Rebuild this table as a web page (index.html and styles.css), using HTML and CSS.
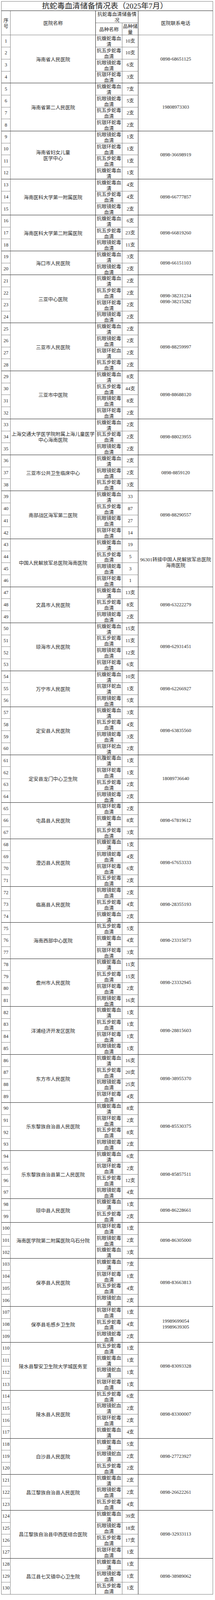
FILE: index.html
```html
<!DOCTYPE html>
<html lang="zh-CN">
<head>
<meta charset="utf-8">
<title>抗蛇毒血清储备情况表（2025年7月）</title>
<link rel="stylesheet" href="styles.css">
</head>
<body>
<div class="sheet">
<div class="title">抗蛇毒血清储备情况表（2025年7月）</div>
<div class="n hd r2">序号</div><div class="h hd r2">医院名称</div><div class="sub hd">抗蛇毒血清储备情况</div><div class="p hd r2">医院联系电话</div>
<div class="s hd">品种名称</div><div class="q hd">品种储量</div>

<div class="n">1</div><div class="h r4">海南省人民医院</div><div class="s">抗蝮蛇毒血清</div><div class="q">10支</div><div class="p r4">0898-68651125</div>
<div class="n">2</div><div class="s">抗五步蛇毒血清</div><div class="q">10支</div>
<div class="n">3</div><div class="s">抗眼镜蛇毒血清</div><div class="q">6支</div>
<div class="n e">4</div><div class="s e">抗银环蛇毒血清</div><div class="q e">3支</div>

<div class="n">5</div><div class="h r4">海南省第二人民医院</div><div class="s">抗蝮蛇毒血清</div><div class="q">7支</div><div class="p r4">19808973303</div>
<div class="n">6</div><div class="s">抗眼镜蛇毒血清</div><div class="q">5支</div>
<div class="n">7</div><div class="s">抗五步蛇毒血清</div><div class="q">2支</div>
<div class="n e">8</div><div class="s e">抗银环蛇毒血清</div><div class="q e">2支</div>

<div class="n">9</div><div class="h r4">海南省妇女儿童<br>医学中心</div><div class="s">抗眼镜蛇毒血清</div><div class="q">1支</div><div class="p r4">0898-36698919</div>
<div class="n">10</div><div class="s">抗银环蛇毒血清</div><div class="q">1支</div>
<div class="n">11</div><div class="s">抗五步蛇毒血清</div><div class="q">1支</div>
<div class="n e">12</div><div class="s e">抗蝮蛇毒血清</div><div class="q e">1支</div>

<div class="n">13</div><div class="h r3">海南医科大学第一附属医院</div><div class="s">抗蝮蛇毒血清</div><div class="q">4支</div><div class="p r3">0898-66777857</div>
<div class="n">14</div><div class="s">抗五步蛇毒血清</div><div class="q">4支</div>
<div class="n e">15</div><div class="s e">抗眼镜蛇毒血清</div><div class="q e">2支</div>

<div class="n">16</div><div class="h r3">海南医科大学第二附属医院</div><div class="s">抗蝮蛇毒血清</div><div class="q">6支</div><div class="p r3">0898-66819260</div>
<div class="n">17</div><div class="s">抗五步蛇毒血清</div><div class="q">23支</div>
<div class="n e">18</div><div class="s e">抗眼镜蛇毒血清</div><div class="q e">11支</div>

<div class="n">19</div><div class="h r2">海口市人民医院</div><div class="s">抗蝮蛇毒血清</div><div class="q">3支</div><div class="p r2">0898-66151103</div>
<div class="n e">20</div><div class="s e">抗眼镜蛇毒血清</div><div class="q e">2支</div>

<div class="n">21</div><div class="h r4">三亚中心医院</div><div class="s">抗蝮蛇毒血清</div><div class="q">2支</div><div class="p r4">0898-38231234<br>0898-38215282</div>
<div class="n">22</div><div class="s">抗五步蛇毒血清</div><div class="q">2支</div>
<div class="n">23</div><div class="s">抗银环蛇毒血清</div><div class="q">2支</div>
<div class="n e">24</div><div class="s e">抗眼镜蛇毒血清</div><div class="q e">2支</div>

<div class="n">25</div><div class="h r4">三亚市人民医院</div><div class="s">抗蝮蛇毒血清</div><div class="q">2支</div><div class="p r4">0898-88259997</div>
<div class="n">26</div><div class="s">抗眼镜蛇毒血清</div><div class="q">2支</div>
<div class="n">27</div><div class="s">抗银环蛇血清</div><div class="q">2支</div>
<div class="n e">28</div><div class="s e">抗五步蛇毒血清</div><div class="q e">2支</div>

<div class="n">29</div><div class="h r4">三亚市中医院</div><div class="s">抗蝮蛇毒血清</div><div class="q">8支</div><div class="p r4">0898-88688120</div>
<div class="n">30</div><div class="s">抗五步蛇毒血清</div><div class="q">44支</div>
<div class="n">31</div><div class="s">抗眼镜蛇毒血清</div><div class="q">8支</div>
<div class="n e">32</div><div class="s e">抗银环蛇毒血清</div><div class="q e">2支</div>

<div class="n">33</div><div class="h r3">上海交通大学医学院附属上海儿童医学中心海南医院</div><div class="s">抗蝮蛇毒血清</div><div class="q">2支</div><div class="p r3">0898-88023955</div>
<div class="n">34</div><div class="s">抗五步蛇毒血清</div><div class="q">2支</div>
<div class="n e">35</div><div class="s e">抗眼镜蛇毒血清</div><div class="q e">2支</div>

<div class="n">36</div><div class="h r3">三亚市公共卫生临床中心</div><div class="s">抗蝮蛇毒血清</div><div class="q">2支</div><div class="p r3">0898-8859120</div>
<div class="n">37</div><div class="s">抗眼镜蛇毒血清</div><div class="q">2支</div>
<div class="n e">38</div><div class="s e">抗五步蛇毒血清</div><div class="q e">3支</div>

<div class="n">39</div><div class="h r4">南部战区海军第二医院</div><div class="s">抗蝮蛇毒血清</div><div class="q">33</div><div class="p r4">0898-88290557</div>
<div class="n">40</div><div class="s">抗五步蛇毒血清</div><div class="q">87</div>
<div class="n">41</div><div class="s">抗眼镜蛇毒血清</div><div class="q">27</div>
<div class="n e">42</div><div class="s e">抗银环蛇毒血清</div><div class="q e">14</div>

<div class="n">43</div><div class="h r4">中国人民解放军总医院海南医院</div><div class="s">抗蝮蛇毒血清</div><div class="q">19</div><div class="p r4">96301转接中国人民解放军总医院海南医院</div>
<div class="n">44</div><div class="s">抗五步蛇毒血清</div><div class="q">5</div>
<div class="n">45</div><div class="s">抗眼镜蛇毒血清</div><div class="q">3</div>
<div class="n e">46</div><div class="s e">抗银环蛇毒血清</div><div class="q e">1</div>

<div class="n">47</div><div class="h r3">文昌市人民医院</div><div class="s">抗蝮蛇毒血清</div><div class="q">13支</div><div class="p r3">0898-63222279</div>
<div class="n">48</div><div class="s">抗五步蛇毒血清</div><div class="q">8支</div>
<div class="n e">49</div><div class="s e">抗眼镜蛇毒血清</div><div class="q e">2支</div>

<div class="n">50</div><div class="h r4">琼海市人民医院</div><div class="s">抗蝮蛇毒血清</div><div class="q">15支</div><div class="p r4">0898-62931451</div>
<div class="n">51</div><div class="s">抗五步蛇毒血清</div><div class="q">11支</div>
<div class="n">52</div><div class="s">抗眼镜蛇毒血清</div><div class="q">12支</div>
<div class="n e">53</div><div class="s e">抗银环蛇毒血清</div><div class="q e">6支</div>

<div class="n">54</div><div class="h r3">万宁市人民医院</div><div class="s">抗蝮蛇毒血清</div><div class="q">10支</div><div class="p r3">0898-62266927</div>
<div class="n">55</div><div class="s">抗银环蛇血清</div><div class="q">1支</div>
<div class="n e">56</div><div class="s e">抗眼镜蛇毒血清</div><div class="q e">5支</div>

<div class="n">57</div><div class="h r4">定安县人民医院</div><div class="s">抗蝮蛇毒血清</div><div class="q">3支</div><div class="p r4">0898-63835560</div>
<div class="n">58</div><div class="s">抗五步蛇毒血清</div><div class="q">4支</div>
<div class="n">59</div><div class="s">抗眼镜蛇毒血清</div><div class="q">3支</div>
<div class="n e">60</div><div class="s e">抗银环蛇血清</div><div class="q e">2支</div>

<div class="n">61</div><div class="h r4">定安县龙门中心卫生院</div><div class="s">抗腹蛇毒血清</div><div class="q">1支</div><div class="p r4">18089736640</div>
<div class="n">62</div><div class="s">抗银环蛇毒血清</div><div class="q">1支</div>
<div class="n">63</div><div class="s">抗五步蛇毒血清</div><div class="q">2支</div>
<div class="n e">64</div><div class="s e">抗眼镜蛇毒血清</div><div class="q e">2支</div>

<div class="n">65</div><div class="h r3">屯昌县人民医院</div><div class="s">抗银环蛇毒血清</div><div class="q">2支</div><div class="p r3">0898-67819612</div>
<div class="n">66</div><div class="s">抗蝮蛇毒血清</div><div class="q">8支</div>
<div class="n e">67</div><div class="s e">抗五步蛇毒血清</div><div class="q e">3支</div>

<div class="n">68</div><div class="h r4">澄迈县人民医院</div><div class="s">抗蝮蛇毒血清</div><div class="q">1支</div><div class="p r4">0898-67653333</div>
<div class="n">69</div><div class="s">抗眼镜蛇毒血清</div><div class="q">4支</div>
<div class="n">70</div><div class="s">抗银环蛇毒血清</div><div class="q">6支</div>
<div class="n e">71</div><div class="s e">抗五步蛇毒血清</div><div class="q e">2支</div>

<div class="n">72</div><div class="h r3">临高县人民医院</div><div class="s">抗眼镜蛇毒血清</div><div class="q">2支</div><div class="p r3">0898-28355193</div>
<div class="n">73</div><div class="s">抗五步蛇毒血清</div><div class="q">4支</div>
<div class="n e">74</div><div class="s e">抗蝮蛇毒血清</div><div class="q e">2支</div>

<div class="n">75</div><div class="h r3">海南西部中心医院</div><div class="s">抗五步蛇毒血清</div><div class="q">5支</div><div class="p r3">0898-23315073</div>
<div class="n">76</div><div class="s">抗蝮蛇毒血清</div><div class="q">4支</div>
<div class="n e">77</div><div class="s e">抗银环蛇毒血清</div><div class="q e">3支</div>

<div class="n">78</div><div class="h r4">儋州市人民医院</div><div class="s">抗蝮蛇毒血清</div><div class="q">11支</div><div class="p r4">0898-23332945</div>
<div class="n">79</div><div class="s">抗五步蛇毒血清</div><div class="q">15支</div>
<div class="n">80</div><div class="s">抗银环蛇毒血清</div><div class="q">2支</div>
<div class="n e">81</div><div class="s e">抗眼镜蛇毒血清</div><div class="q e">16支</div>

<div class="n">82</div><div class="h r4">洋浦经济开发区医院</div><div class="s">抗蝮蛇毒血清</div><div class="q">1支</div><div class="p r4">0898-28815603</div>
<div class="n">83</div><div class="s">抗五步蛇毒血清</div><div class="q">1支</div>
<div class="n">84</div><div class="s">抗银环蛇毒血清</div><div class="q">1支</div>
<div class="n e">85</div><div class="s e">抗眼镜蛇毒血清</div><div class="q e">1支</div>

<div class="n">86</div><div class="h r4">东方市人民医院</div><div class="s">抗蝮蛇毒血清</div><div class="q">16支</div><div class="p r4">0898-38955370</div>
<div class="n">87</div><div class="s">抗五步蛇毒血清</div><div class="q">20支</div>
<div class="n">88</div><div class="s">抗眼镜蛇毒血清</div><div class="q">25支</div>
<div class="n e">89</div><div class="s e">抗银环蛇毒血清</div><div class="q e">4支</div>

<div class="n">90</div><div class="h r4">乐东黎族自治县人民医院</div><div class="s">抗蝮蛇毒血清</div><div class="q">8支</div><div class="p r4">0898-85530375</div>
<div class="n">91</div><div class="s">抗银环蛇毒血清</div><div class="q">2支</div>
<div class="n">92</div><div class="s">抗五步蛇毒血清</div><div class="q">8支</div>
<div class="n e">93</div><div class="s e">抗眼镜蛇毒血清</div><div class="q e">2支</div>

<div class="n">94</div><div class="h r4">乐东黎族自治县第二人民医院</div><div class="s">抗蝮蛇毒血清</div><div class="q">6支</div><div class="p r4">0898-85857511</div>
<div class="n">95</div><div class="s">抗银环蛇毒血清</div><div class="q">2支</div>
<div class="n">96</div><div class="s">抗五步蛇毒血清</div><div class="q">12支</div>
<div class="n e">97</div><div class="s e">抗眼镜蛇毒血清</div><div class="q e">4支</div>

<div class="n">98</div><div class="h r2">琼中县人民医院</div><div class="s">抗蝮蛇毒血清</div><div class="q">1支</div><div class="p r2">0898-86228661</div>
<div class="n e">99</div><div class="s e">抗五步蛇毒血清</div><div class="q e">2支</div>

<div class="n">100</div><div class="h r3">海南医学院第二附属医院乌石分院</div><div class="s">抗银环蛇毒血清</div><div class="q">1支</div><div class="p r3">0898-86305000</div>
<div class="n">101</div><div class="s">抗眼镜蛇毒血清</div><div class="q">2支</div>
<div class="n e">102</div><div class="s e">抗蝮蛇毒血清</div><div class="q e">3支</div>

<div class="n">103</div><div class="h r4">保亭县人民医院</div><div class="s">抗蝮蛇毒血清</div><div class="q">7支</div><div class="p r4">0898-83663813</div>
<div class="n">104</div><div class="s">抗银环蛇毒血清</div><div class="q">1支</div>
<div class="n">105</div><div class="s">抗五步蛇毒血清</div><div class="q">4支</div>
<div class="n e">106</div><div class="s e">抗眼镜蛇血清</div><div class="q e">2支</div>

<div class="n">107</div><div class="h r3">保亭县毛感乡卫生院</div><div class="s">抗银环蛇毒血清</div><div class="q">1支</div><div class="p r3">19989699054<br>19989639305</div>
<div class="n">108</div><div class="s">抗五步蛇毒血清</div><div class="q">4支</div>
<div class="n e">109</div><div class="s e">抗眼镜蛇毒血清</div><div class="q e">2支</div>

<div class="n">110</div><div class="h r4">陵水县黎安卫生院大学城医务室</div><div class="s">抗五步蛇毒血清</div><div class="q">1支</div><div class="p r4">0898-83093328</div>
<div class="n">111</div><div class="s">抗蝮蛇毒血清</div><div class="q">1支</div>
<div class="n">112</div><div class="s">抗眼镜蛇血清</div><div class="q">1支</div>
<div class="n e">113</div><div class="s e">抗银环蛇毒血清</div><div class="q e">1支</div>

<div class="n">114</div><div class="h r4">陵水县人民医院</div><div class="s">抗五步蛇毒血清</div><div class="q">6支</div><div class="p r4">0898-83300007</div>
<div class="n">115</div><div class="s">抗眼镜蛇血清</div><div class="q">2支</div>
<div class="n">116</div><div class="s">抗银环蛇毒血清</div><div class="q">2支</div>
<div class="n e">117</div><div class="s e">抗蝮蛇毒血清</div><div class="q e">4支</div>

<div class="n">118</div><div class="h r3">白沙县人民医院</div><div class="s">抗蝮蛇毒血清</div><div class="q">5支</div><div class="p r3">0898-27723927</div>
<div class="n">119</div><div class="s">抗眼镜蛇血清</div><div class="q">2支</div>
<div class="n e">120</div><div class="s e">抗五步蛇毒血清</div><div class="q e">2支</div>

<div class="n">121</div><div class="h r3">昌江黎族自治县人民医院</div><div class="s">抗蝮蛇毒血清</div><div class="q">2支</div><div class="p r3">0898-26622261</div>
<div class="n">122</div><div class="s">抗眼镜蛇毒血清</div><div class="q">2支</div>
<div class="n e">123</div><div class="s e">抗五步蛇毒血清</div><div class="q e">4支</div>

<div class="n">124</div><div class="h r4">昌江黎族自治县中西医结合医院</div><div class="s">抗蝮蛇毒血清</div><div class="q">39支</div><div class="p r4">0898-32933113</div>
<div class="n">125</div><div class="s">抗眼镜蛇毒血清</div><div class="q">18支</div>
<div class="n">126</div><div class="s">抗五步蛇毒血清</div><div class="q">17支</div>
<div class="n e">127</div><div class="s e">抗银环蛇毒血清</div><div class="q e">1支</div>

<div class="n">128</div><div class="h r3 last">昌江县七叉镇中心卫生院</div><div class="s">抗蝮蛇毒血清</div><div class="q">1支</div><div class="p r3 last">0898-38989062</div>
<div class="n">129</div><div class="s">抗眼镜蛇毒血清</div><div class="q">1支</div>
<div class="n last">130</div><div class="s last">抗五步蛇毒血清</div><div class="q last">1支</div>
</div>
</body>
</html>
```
FILE: styles.css
```css
:root {
  /* one reference pixel of height, scaled to the real window height */
  --u: calc(100vh / 6153);
}
html, body {
  background: #ffffff;
}
body {
  margin: 0;
  padding: calc(5 * var(--u)) 0 0 3px;
  font-family: "Liberation Serif", "Noto Sans CJK SC", serif;
  font-size: 12.5px;
  line-height: calc(22.5 * var(--u));
  color: #262626;
}
.sheet {
  display: grid;
  width: 542.4px;
  box-sizing: border-box;
  grid-template-columns: 23.3px 217.7px 68.3px 41px 191.1px;
  grid-template-rows:
    calc(36.3 * var(--u))
    calc(46.5 * var(--u))
    calc(46.5 * var(--u))
    repeat(130, calc(46.14 * var(--u)));
  border-top: 1px solid #7a7a7a;
  border-left: 1px solid #7a7a7a;
}
.sheet > div {
  box-sizing: border-box;
  min-width: 0;
  min-height: 0;
  display: flex;
  align-items: center;
  justify-content: center;
  text-align: center;
  border-right: 1px solid #7a7a7a;
  border-bottom: 1px solid #8a8a8a;
  padding: 0 1px;
}

.sheet > .title {
  grid-column: 1 / -1;
  font-family: "Liberation Serif", "Noto Sans CJK SC", serif;
  font-size: 19.5px;
  line-height: calc(26 * var(--u));
  color: #222222;
  padding: 0 12px 0 0;
  border-bottom-color: #1c1c1c;
}

.sheet > .n { grid-column: 1; padding: 0; }
.sheet > .h {
  grid-column: 2;
  font-family: "Noto Sans CJK SC", sans-serif;
  border-right-color: #1c1c1c;
  border-bottom-color: #1c1c1c;
}
.sheet > .s { grid-column: 3; font-family: "Noto Sans CJK SC", sans-serif; padding: 0 2px; }
.sheet > .q { grid-column: 4; padding: 0; border-right-color: #1c1c1c; }
.sheet > .p { grid-column: 5; border-bottom-color: #1c1c1c; }
.sheet > .sub {
  grid-column: 3 / span 2;
  font-family: "Noto Sans CJK SC", sans-serif;
  border-right-color: #1c1c1c;
}
.sheet > .hd { font-family: "Noto Sans CJK SC", sans-serif; border-bottom-color: #7a7a7a; }

.r2 { grid-row: span 2; }
.r3 { grid-row: span 3; }
.r4 { grid-row: span 4; }

.sheet > .e { border-bottom-color: #1c1c1c; }
.sheet > .last { border-bottom-color: #7a7a7a; }
```
